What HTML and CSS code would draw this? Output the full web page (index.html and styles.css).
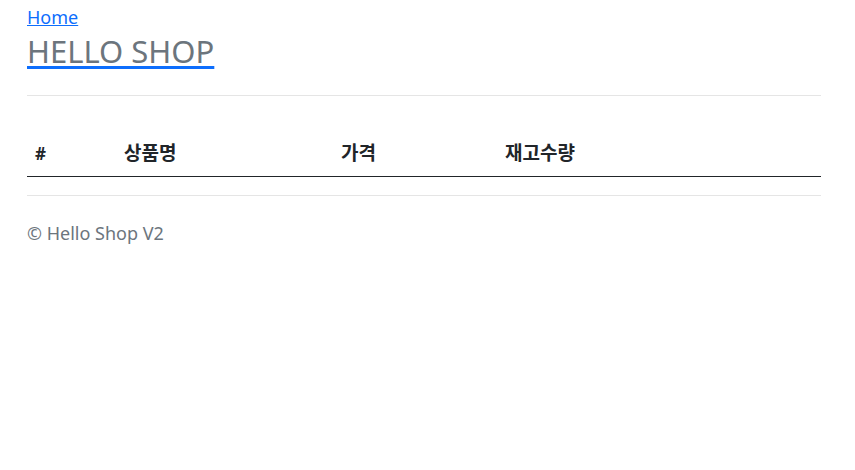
FILE: index.html
```html
<!DOCTYPE html>
<html lang="ko">
<head>
    <meta charset="UTF-8">
    <meta name="viewport" content="width=device-width, initial-scale=1.0">
    <title>Hello Shop</title>
    <link rel="stylesheet" href="styles.css">
</head>
<body>
    <div class="container">
        <header class="header">
            <a class="home-link" href="#">Home</a>
            <h1 class="brand"><a href="#"><span>HELLO SHOP</span></a></h1>
        </header>

        <hr class="divider">

        <table class="items">
            <thead>
                <tr>
                    <th class="col-id">#</th>
                    <th class="col-name">상품명</th>
                    <th class="col-price">가격</th>
                    <th>재고수량</th>
                </tr>
            </thead>
            <tbody></tbody>
        </table>

        <hr class="divider divider-bottom">

        <footer class="footer">© Hello Shop V2</footer>
    </div>
</body>
</html>
```

FILE: styles.css
```css
body {
    margin: 0;
    font-family: "Noto Sans", "Noto Sans CJK KR", sans-serif;
    font-size: 18px;
    line-height: 1.5;
    color: #212529;
    background: #fff;
}

.container {
    padding: 4px 34px 0 27px;
}

.home-link {
    color: #0d6efd;
    text-decoration: underline;
}

.brand {
    margin: 2px 0 0;
    font-size: 31px;
    font-weight: 400;
    line-height: 1.2;
}

.brand a {
    color: #0d6efd;
    text-decoration: underline;
    text-decoration-thickness: 3px;
    text-underline-offset: 3px;
}

.brand span {
    color: #6c757d;
}

.divider {
    margin: 25px 0 24px;
    border: 0;
    border-top: 1px solid #e5e5e5;
}

.divider-bottom {
    margin-top: 18px;
}

.items {
    width: 100%;
    border-collapse: collapse;
    margin-top: 35px;
}

.items th {
    text-align: left;
    font-size: 19px;
    font-weight: 700;
    padding: 8px;
    border-bottom: 1px solid #212529;
}

.col-id { width: 73px; }
.col-name { width: 201px; }
.col-price { width: 148px; }

.items .col-id { font-size: 17px; }

.footer {
    color: #6c757d;
}
```
